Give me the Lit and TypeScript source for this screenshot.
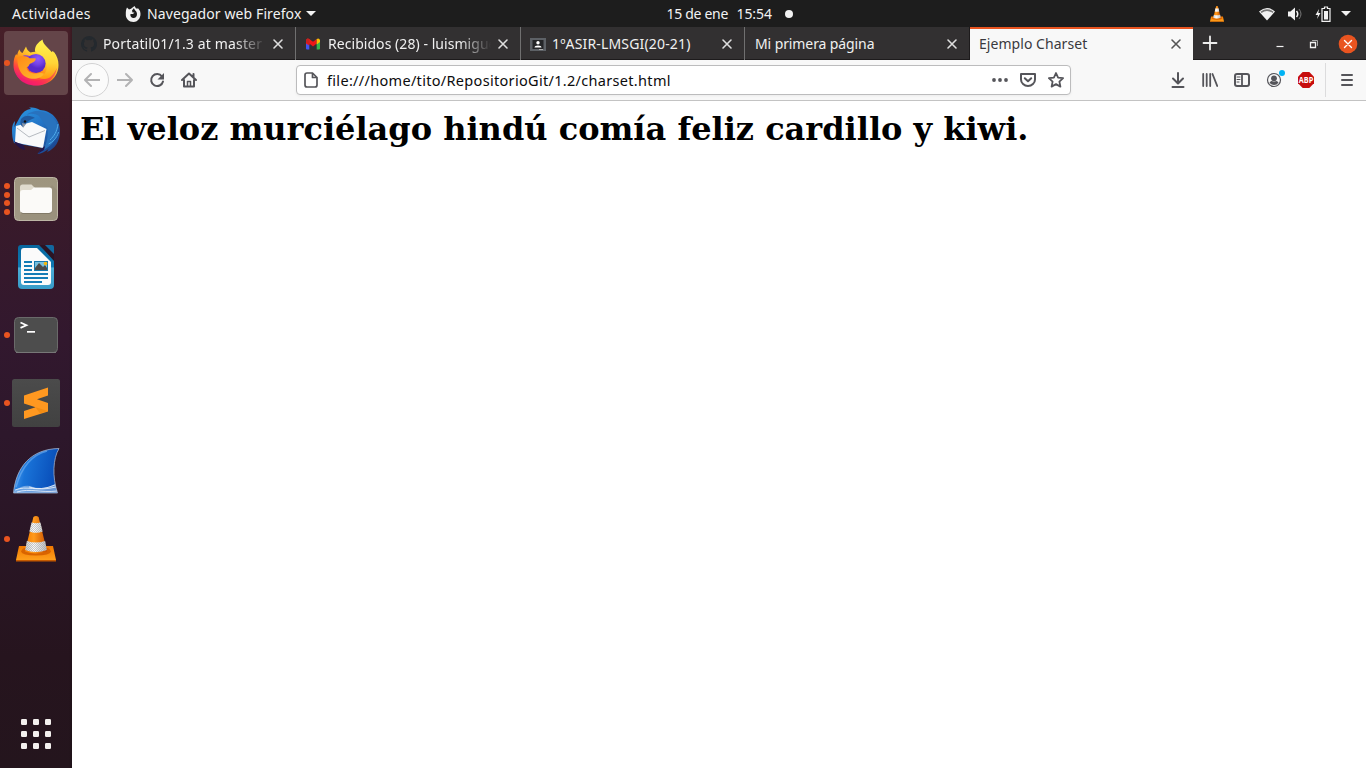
import { LitElement, html, css, svg, nothing, TemplateResult } from "lit";
import { customElement } from "lit/decorators.js";

const stripes = "M19.600 7.500q4.400 1.500 8.800 0l2.200 9q-6.600 2.500-13.200 0zM14.900 26q9.100 3 18.200 0l1.700 9q-10.800 4-21.600 0z";

const vlcCone = (id: string) => svg`
  <defs>
    <linearGradient id="${id}o"><stop offset="0" stop-color="#f47b00"/><stop offset=".4" stop-color="#ff9a1c"/><stop offset="1" stop-color="#c85000"/></linearGradient>
    <linearGradient id="${id}w"><stop offset="0" stop-color="#c9cccd"/><stop offset=".4" stop-color="#fafafa"/><stop offset="1" stop-color="#b9bcbd"/></linearGradient>
    <linearGradient id="${id}b" x2="0" y2="1"><stop offset="0" stop-color="#f07800"/><stop offset="1" stop-color="#ffa21e"/></linearGradient>
  </defs>
  <path d="M7 31h34l3 14v1H4v-1z" fill="url(#${id}b)"/><path d="M4 45h40v1.500H4z" fill="#c55a00"/>
  <path d="M9 36.500q1-3 3-3.500h24q2 .5 3 3.500-1 4-15 4t-15-4z" fill="#d96400"/>
  <path d="M12.900 36.500L21.400 2q2.600-2 5.200 0l8.500 34.500q-11.100 4-22.200 0z" fill="url(#${id}o)"/>
  <path d=${stripes} fill="url(#${id}w)"/>
`;

const firefox = svg`
  <defs>
    <linearGradient id="fa" x1=".85" y1=".05" x2=".2" y2=".95"><stop offset="0" stop-color="#fff44f"/><stop offset=".35" stop-color="#ffc62e"/><stop offset=".58" stop-color="#ff8a16"/><stop offset=".78" stop-color="#ff3b47"/><stop offset="1" stop-color="#e31587"/></linearGradient>
    <radialGradient id="fb" cx=".6" cy=".25"><stop offset="0" stop-color="#9059ff"/><stop offset=".6" stop-color="#7542e5"/><stop offset="1" stop-color="#592acb"/></radialGradient>
    <linearGradient id="fc" x2="1" y2="1"><stop offset="0" stop-color="#ff8a16"/><stop offset="1" stop-color="#ffbd2f"/></linearGradient>
    <linearGradient id="fd" x2="0" y2="1"><stop offset="0" stop-color="#fff44f"/><stop offset=".6" stop-color="#ffd537"/><stop offset="1" stop-color="#ff980e"/></linearGradient>
  </defs>
  <path d="M7.500 10.500c.5 1.800 1.500 3 3 3.500L14 7.500c.7 2.500 2 4.500 4.500 6 4-1.500 9-1 13 1.500l9-1 1.500-1c3 4 4.500 8 4.500 13C46.500 38.500 36.500 46.500 24 46.500S1.500 37.500 1.500 26c0-5 1-8.500 2.700-11 .5 1 .8 1.200 1 1.200.3-2 1-4 2.300-5.700z" fill="url(#fa)"/>
  <path d="M3 31c3 9 12 11.500 21 10.500C33 40.500 40 37 45 29c-2 11-11 17.500-21 17.500S5 42 3 31z" fill="#f5156c" opacity=".5"/>
  <path d="M23 12.500C22.500 7 26 3.500 30.500.5c.5 5.500 6.500 8.500 9 12.500l1.500-1c3.500 6 4.500 11 3.500 16-1.500 7.500-7 12-12 12-3.500 0-5-1-5.500-2 7-2 9-8 7-14-1.500-5-6-8.500-11-11.500z" fill="url(#fd)"/>
  <path d="M7.500 19c5-4 8-2.500 10-2 5-2.500 11-1.500 14 2.500" fill="#873fce"/>
  <circle cx="24" cy="24.500" r="9.600" fill="url(#fb)"/>
  <path d="M5.500 18.500c4.500-2.500 9-1.500 12 .8h6c1 2-1.500 4-5.500 5.500-1.200 1.500-1.300 3-3.500 3.500.5 5 6 7 11.500 6 3-.5 5-.5 6 .5-3 5-11 6.500-17.500 3.500S5 27 5.500 18.500z" fill="url(#fc)"/>
`;

const thunderbird = svg`
  <defs><linearGradient id="ta" x2=".8" y2="1"><stop offset="0" stop-color="#2c9be6"/><stop offset=".5" stop-color="#2374c6"/><stop offset="1" stop-color="#1b438c"/></linearGradient></defs>
  <path d="M8 10C11 5 14 2.500 19 2c-1-1-2-1.200-2-1.200 4-.8 8 .2 11 2.200 11 .5 20 9 20 21 0 10-5 18-13 21l1.500-3c-4 3-7 4.500-11 5L30 41 2 36C.5 32 0 28 0 23c0-4 1-7 3-9l-.5 6z" fill="url(#ta)"/>
  <path d="M4 19l16-4 14.500 7L31 41 3 35.500z" fill="#f8f9fa"/><path d="M5 21l12 9 16-6.500" stroke="#b5bac0" fill="none"/>
  <path d="M9 13C13 6 21 5 27 9l8.500 12c1 8-1 15-4 22 12-6 16-16 13-28C38 5 22-3 9 13z" fill="#2872be"/>
  <path d="M9 12c5-5 10-3 14-1-5 1-8 4-12 9-3-1.500-3-5-2-8z" fill="#215a9f"/><path d="M10 16l1 5 3-4z" fill="#8c98a8"/><circle cx="13" cy="14.500" r="1.200" fill="#111"/>
  <path d="M2 34c3 2 9 3 10 5l1 4C8 42 4 38.500 2 34zM29 42l4-3-1 4-6 3.500z" fill="#23164a"/>
  <path d="M46 17c-1 8-4 12-8 16M46.500 25c-2 7-6 10-10 12" stroke="#4fabea" fill="none"/>
`;

const files = svg`
  <defs><linearGradient id="na" x2="0" y2="1"><stop offset="0" stop-color="#9e957f"/><stop offset="1" stop-color="#a29a86"/></linearGradient></defs>
  <rect x="2.500" y="2.500" width="43" height="43" rx="4" fill="url(#na)" stroke="#bdb6a5"/>
  <path d="M8 40L40 10l5 5v26q0 4-4 4H8z" fill="#8b846f" opacity=".35"/>
  <path d="M8 12q0-2.500 2.500-2.500h9L23 13v5H8z" fill="#e0dbcd"/><path d="M8 18q0-3 3-3h8l3-2.500h15.500q2.500 0 2.500 2.500v20q0 3-3 3H11q-3 0-3-3z" fill="#fbfaf8"/>
  <path d="M9 37.500q1 1 2 1h26q2 0 3-2" stroke="#78705f" fill="none" opacity=".7"/>
`;

const writer = svg`
  <defs><linearGradient id="wa" x2="0" y2="1"><stop offset="0" stop-color="#07679e"/><stop offset=".5" stop-color="#0f79b2"/><stop offset=".52" stop-color="#4baed8"/><stop offset="1" stop-color="#379cc9"/></linearGradient></defs>
  <path d="M9 2h18l15 15v25q0 4-4 4H10q-4 0-4-4V5q0-3 3-3z" fill="url(#wa)"/>
  <path d="M12 5h13l14 14v20q0 3-3 3H12q-3 0-3-3V8q0-3 3-3z" fill="#fbfbfb"/>
  <path d="M28 2h5l9 9v7z" fill="#2b1424"/><path d="M33 2h7q2 0 2 2v7z" fill="#1268a0"/>
  <path d="M12 18h8v2h-8zm0 4h8v2h-8zm0 4h8v2h-8zm0 4h24v2H12zm0 4h24v2H12zm0 4h18v2H12z" fill="#147cb6"/>
  <path d="M22 18h14v10H22z" fill="#1678ad"/><path d="M23 19h12v8H23z" fill="#77c0df"/><path d="M23 27v-2l4-5 4 4 2-2 2 3v2z" fill="#4b4b4b"/><circle cx="33.500" cy="20.500" r="1.800" fill="#f5b70e"/>
`;

const terminal = svg`
  <rect x="2.500" y="6.500" width="43" height="35" rx="4" fill="#4d4d4d" stroke="#6a6a6a"/>
  <path d="M4 41.500h40" stroke="#777"/><path d="M8.500 11.500l6 2.700-6 2.700" fill="none" stroke="#fff" stroke-width="1.700"/><path d="M15 20h8v1.700h-8z" fill="#fff"/>
`;

const sublime = svg`
  <defs><linearGradient id="sa" x2="0" y2="1"><stop offset="0" stop-color="#4b4b4b"/><stop offset="1" stop-color="#414141"/></linearGradient></defs>
  <rect width="48" height="48" rx="2.500" fill="url(#sa)"/>
  <path d="M12 16.500L36 8.500v8L25 20.300 36 24v8.500L12 40v-8l11.500-3.800L12 24.500z" fill="#ff9820"/><path d="M13 25l23 7-8 2.500-4.500-6.300z" fill="#e27c00" opacity=".4"/>
`;

const wireshark = svg`
  <defs><linearGradient id="ka" x1="0" y1=".5" x2="1" y2=".7"><stop offset="0" stop-color="#4a9bed"/><stop offset=".25" stop-color="#1973d8"/><stop offset="1" stop-color="#0648b4"/></linearGradient></defs>
  <path d="M1.500 46C4 20 19 2 47 1.500c-6 10-7 28-1.500 44.500z" fill="url(#ka)" stroke="#a4b1c9" stroke-width=".8"/>
  <path d="M4 40C9 22 19 8 35 4" stroke="#72b0f2" stroke-width="1.500" opacity=".6" fill="none"/>
  <path d="M2 44q11-8 19-4t22-3l2 9H2z" fill="#a8c6ea" opacity=".6"/><path d="M3 43c12-5 21 2 41-3M5 45c13-4 24 1 40-1M17 40q12 4 26-2" stroke="#fff" stroke-width=".7" fill="none"/>
`;

const vlc = svg`
  <defs><pattern id="va" width="2" height="2" patternUnits="userSpaceOnUse"><path d="M0 0h1v1H0zM1 1h1v1H1z" fill="#999"/></pattern></defs>
  ${vlcCone("v")}
  <path d=${stripes} fill="url(#va)" opacity=".5"/>
`;

interface Launcher { name: string; icon: unknown; windows: number; active?: boolean }
const launchers: Launcher[] = [
  { name: "firefox", icon: firefox, windows: 1, active: true },
  { name: "thunderbird", icon: thunderbird, windows: 0 },
  { name: "files", icon: files, windows: 4 },
  { name: "writer", icon: writer, windows: 0 },
  { name: "terminal", icon: terminal, windows: 1 },
  { name: "sublime", icon: sublime, windows: 1 },
  { name: "wireshark", icon: wireshark, windows: 0 },
  { name: "vlc", icon: vlc, windows: 1 },
];

const github = svg`<path fill="#24292e" d="M8 0a8 8 0 0 0-2.530 15.590c.4.070.55-.17.55-.38v-1.340c-2.230.48-2.700-1.070-2.700-1.070-.36-.92-.89-1.170-.89-1.170-.73-.5.060-.49.060-.49.800.060 1.230.83 1.230.83.71 1.220 1.870.87 2.330.66.070-.52.280-.87.500-1.070-1.780-.2-3.640-.89-3.640-3.950 0-.87.310-1.590.82-2.150-.08-.2-.36-1.020.080-2.120 0 0 .67-.21 2.200.82a7.600 7.600 0 0 1 4 0c1.530-1.040 2.200-.82 2.200-.82.44 1.100.16 1.920.080 2.120.51.560.82 1.270.82 2.150 0 3.070-1.870 3.750-3.650 3.950.29.250.54.730.54 1.480v2.190c0 .210.150.460.550.380A8 8 0 0 0 8 0z"/>`;
const gmail = svg`<path d="M1 4v8.500q0 1 1 1h2.300V7z" fill="#4254ee"/><path d="M15 4v8.500q0 1-1 1h-2.300V7z" fill="#34b84c"/><path d="M1 7.500V4q1-2.500 3.300-1L8 5.800 11.700 3v4.500L8 10.500 4.300 7.500v2z" fill="#ee1717"/><path d="M11.700 3Q14 1.500 15 4v2l-3.300 2.500z" fill="#fbbc04"/><path d="M1 4v2l3.300 2.500V3Q2 1.500 1 4z" fill="#c5221f"/>`;
const classroom = svg`<path d="M0 2h16v13H0z" fill="#5d6166"/><path d="M2.500 4h11v9h-11z" fill="#242527"/><circle cx="8" cy="6.800" r="1.700" fill="#fff"/><path d="M4.500 11.500q0-2 3.500-2t3.500 2z" fill="#fff"/><path d="M9 13h4v1H9z" fill="#aaa"/>`;

interface Tab { key: string; title: string; icon?: unknown; active?: boolean }
const tabs: Tab[] = [
  { key: "t1", title: "Portatil01/1.3 at master -", icon: github },
  { key: "t2", title: "Recibidos (28) - luismigue", icon: gmail },
  { key: "t3", title: "1ºASIR-LMSGI(20-21)", icon: classroom },
  { key: "t4", title: "Mi primera página" },
  { key: "t5", title: "Ejemplo Charset", active: true },
];

const glyph = (body: unknown, cls = "", size = 16): TemplateResult =>
  html`<svg class="ic ${cls}" width=${size} height=${size} viewBox="0 0 ${size} ${size}" fill="none" stroke="currentColor" stroke-width="2" stroke-linecap="round" stroke-linejoin="round">${body}</svg>`;
const cross = svg`<path d="M4 4l8 8M12 4l-8 8" stroke-width="1.600"/>`;

@customElement("top-bar")
class TopBar extends LitElement {
  static styles = css`
    :host { display: grid; grid-template-columns: 1fr auto 1fr; align-items: center; height: 27px; background: #1d1d1d; color: #f2f2f2; font: 14px/27px "Noto Sans", sans-serif; white-space: pre; }
    .left, .mid, .right { display: flex; align-items: center; height: 27px; }
    .left { padding-left: 12px; }
    .act { width: 113px; letter-spacing: .38px; }
    .app { width: 159px; margin-left: 5px; letter-spacing: .1px; }
    .mid { padding-left: 93px; gap: 8px; }
    .date { width: 62px; letter-spacing: -.3px; } .time { width: 35px; letter-spacing: -.1px; }
    .dot { width: 8px; height: 8px; border-radius: 50%; background: #f2f2f2; margin-left: 5px; }
    .right { justify-content: flex-end; padding-right: 15px; }
    .cone { margin-right: 34px; } .wifi { margin-right: 12px; } .vol { margin-right: 12px; } .bat { margin-right: 10px; }
    svg { display: block; flex: none; }
  `;
  render() {
    return html`
      <div class="left"><span class="act">Actividades</span>
        <svg width="17" height="16" viewBox="0 0 17 16"><path fill="#f2f2f2" d="M2 1.500l2 2 2-.8L9.500 0 11 2.500l2.300 0L15 5c2 6-2 11-6.500 11S.5 12.500.8 8C.8 5.500 1 3.500 2 1.500z"/><path fill="#1d1d1d" d="M7 4.500l2-2.500c0 2 3 3 3 6s-2 4.500-4 4-3-2-2.500-4H8l1.500-1.500H7.500z"/></svg>
        <span class="app">Navegador web Firefox</span>
        <svg width="10" height="5" viewBox="0 0 10 5"><path d="M0 0h10L5 5z" fill="#f2f2f2"/></svg></div>
      <div class="mid"><span class="date">15 de ene</span><span class="time">15:54</span><span class="dot"></span></div>
      <div class="right">
        <svg class="cone" width="16" height="16" viewBox="3 1 42 46">${vlcCone("p")}</svg>
        <svg class="wifi" width="16" height="14" viewBox="0 0 16 14"><path d="M0 4.500q8-7 16 0L8 13.500z" fill="#f2f2f2"/><path d="M1.500 4.700q6.500-4.700 13 0l-1 1.200q-5.500-4-11 0z" fill="#777"/></svg>
        <svg class="vol" width="16" height="14" viewBox="0 0 16 14"><path d="M1 4.500h2.500L8 .5v13L3.500 9.500H1z" fill="#f2f2f2"/><path d="M9.500 4q2.500 3 0 6" stroke="#f2f2f2" stroke-width="1.500" fill="none"/><path d="M12 2q4 5 0 10" stroke="#777" fill="none"/></svg>
        <svg class="bat" width="16" height="16" viewBox="0 0 16 16"><path d="M4 3L.5 9H3l-1 4 3.500-6H3.300z" fill="#f2f2f2"/><path d="M7 2.500h2.500V1h3v1.500H15v12.900H7z" fill="none" stroke="#f2f2f2" stroke-width="1.200"/><path d="M9 5h4v8.500H9z" fill="#f2f2f2"/></svg>
        <svg width="10" height="5" viewBox="0 0 10 5"><path d="M0 0h10L5 5z" fill="#f2f2f2"/></svg>
      </div>`;
  }
}

@customElement("app-dock")
class AppDock extends LitElement {
  static styles = css`
    :host { display: flex; flex-direction: column; justify-content: space-between; box-sizing: border-box; width: 72px; padding: 4px 0 17px; background: linear-gradient(90deg, transparent 69px, #0003), linear-gradient(#461f28 0, #3c1b28 15%, #32182e 42%, #2d172b 55%, #26141e 85%, #24151d 100%); }
    .list { display: flex; flex-direction: column; gap: 4px; }
    .slot { display: grid; grid-template-columns: 4px 64px; align-items: center; height: 64px; }
    .dots { grid-area: 1 / 2; justify-self: start; display: flex; flex-direction: column; gap: 2.700px; z-index: 1; }
    .dot { width: 6px; height: 6px; border-radius: 50%; background: #e95420; flex: none; }
    .tile { grid-area: 1 / 2; width: 64px; height: 64px; border-radius: 4px; display: grid; place-items: center; }
    .on { background: #644549; }
    .apps { display: block; margin: 0 0 0 20px; }
  `;
  render() {
    return html`
      <div class="list">${launchers.map((l) => html`
        <div class="slot"><div class="dots">${Array.from({ length: l.windows }, () => html`<i class="dot"></i>`)}</div>
          <div class="tile ${l.active ? "on" : ""}"><svg width="48" height="48" viewBox="0 0 48 48">${l.icon}</svg></div></div>`)}
      </div>
      <svg class="apps" width="32" height="34" viewBox="0 0 32 34">${[0, 1, 2].map((r) => [0, 1, 2].map((c) => svg`<rect x=${1 + c * 12} y=${2 + r * 12} width="6" height="6" rx="1.200" fill="#f4f1ef"/>`))}</svg>`;
  }
}

@customElement("browser-window")
class BrowserWindow extends LitElement {
  static styles = css`
    :host { display: grid; grid-template-rows: 33px 41px 1fr; min-width: 0; background: #fff; font: 14px/20px "Noto Sans", sans-serif; white-space: nowrap; }
    svg { display: block; flex: none; }
    .strip { display: flex; background: #323031; box-shadow: inset 0 -1px #1d1b1c; color: #f0f0f0; }
    .tab { display: flex; align-items: center; box-sizing: border-box; width: 225px; border-right: 1px solid #707070; padding: 0 9px; }
    .t1 { width: 224px; } .t3 { width: 224px; } .t4 { border-right-color: #1d1b1c; padding-left: 10px; }
    .t5 { width: 223px; border: 0; background: #f8f8f8; color: #3a3a3e; box-shadow: inset 0 2px #e95420; }
    .fav { margin-right: 6px; }
    .title { flex: 1; overflow: hidden; white-space: pre; line-height: 33px; }
    .t1 .title, .t2 .title { -webkit-mask-image: linear-gradient(90deg, #000 calc(100% - 32px), transparent); mask-image: linear-gradient(90deg, #000 calc(100% - 32px), transparent); }
    .t1 .title { letter-spacing: .15px; } .t2 .title { margin-left: 1px; letter-spacing: .05px; }
    .t3 .title { letter-spacing: .16px; } .t4 .title { letter-spacing: -.1px; } .t5 .title { letter-spacing: .05px; }
    .x { color: #dedede; } .t5 .x { color: #555; }
    .tab .x { margin-left: 4px; }
    .plus { margin: 8px 0 0 9px; color: #eee; }
    .ctl { display: flex; align-items: center; margin-left: auto; padding-right: 8px; color: #f2f2f2; }
    .min { margin-right: 18px; } .max { margin-right: 16px; }
    .bar { display: flex; align-items: center; box-sizing: border-box; padding-left: 3px; background: #f8f8f8; border-bottom: 1px solid #c3c3c3; color: #55555a; }
    .back { display: grid; place-items: center; box-sizing: border-box; width: 34px; height: 34px; border: 1px solid #d2d2d3; border-radius: 50%; background: #fbfbfb; color: #b3b3b4; }
    .fwd { margin-left: 8px; color: #b3b3b4; } .gap { margin-left: 16px; }
    .url { display: flex; align-items: center; box-sizing: border-box; width: 775px; height: 30px; margin-left: 99px; padding: 0 6px; border: 1px solid #bcbcbd; border-radius: 4px; background: #fff; box-shadow: 0 1px 3px #0000000d; }
    .addr { flex: 1; margin-left: 8px; color: #0c0c0d; font-size: 14.500px; letter-spacing: .31px; }
    .g12 { margin-left: 12px; }
    .tools { display: flex; align-items: center; gap: 16px; margin-left: 99px; }
    .acct { overflow: visible; }
    .menu { display: flex; align-items: center; height: 34px; margin-left: 11px; padding-left: 13px; border-left: 1px solid #dcdcdd; }
    .abp { font: 700 8px "Open Sans", sans-serif; }
    .page { overflow: hidden; padding: 9px 8px; }
    h1 { margin: 0; color: #000; font: bold 32px/38px "DejaVu Serif", serif; }
  `;
  render() {
    return html`
      <div class="strip">
        ${tabs.map((t) => html`<div class="tab ${t.key}">
          ${t.icon ? html`<svg class="fav" width="16" height="16" viewBox="0 0 16 16">${t.icon}</svg>` : nothing}
          <span class="title">${t.title}</span>${glyph(cross, "x")}</div>`)}
        ${glyph(svg`<path d="M8 1.500v13M1.500 8h13" stroke-width="1.800"/>`, "plus")}
        <div class="ctl">
          ${glyph(svg`<path d="M4.500 10.500h7" stroke-width="1.200" stroke-linecap="butt"/>`, "min")}
          ${glyph(svg`<path d="M4.500 6.500h5v5h-5z" stroke-width="1.300" stroke-linejoin="miter"/><path d="M6.500 4.500h5v5" stroke-width="1" stroke="#aaa"/>`, "max")}
          ${glyph(svg`<circle cx="10" cy="10" r="9.300" fill="#e95420" stroke="none"/><path d="M6.500 6.500l7 7m0-7l-7 7" stroke="#fff" stroke-width="1.400"/>`, "", 20)}
        </div>
      </div>
      <div class="bar">
        <span class="back">${glyph(svg`<path d="M15.500 8H1M7 2L1 8l6 6"/>`)}</span>
        ${glyph(svg`<path d="M.5 8H15M9 2l6 6-6 6"/>`, "fwd")}
        ${glyph(svg`<path d="M13 4.500A6 6 0 1 0 14 9.500"/><path d="M15 1v6.500H8.500z" fill="currentColor" stroke="none"/>`, "gap")}
        ${glyph(svg`<path d="M1 8l7-6.500L15 8M3 8v6.500h10V8M12.500 5V2"/><path d="M6.500 14V9.500h3V14" stroke-width="1.500"/>`, "gap")}
        <div class="url">
          ${glyph(svg`<path d="M4 1h5.500L14 5.500V13q0 2-2 2H4q-2 0-2-2V3q0-2 2-2zM9.500 1v4.500H14" stroke-width="1.700"/>`)}
          <span class="addr">file:///home/tito/RepositorioGit/1.2/charset.html</span>
          ${glyph(svg`<g fill="currentColor" stroke="none"><circle cx="2" cy="8" r="1.900"/><circle cx="8" cy="8" r="1.900"/><circle cx="14" cy="8" r="1.900"/></g>`, "ell")}
          ${glyph(svg`<path d="M1 2h14v5.500a7 6.500 0 0 1-14 0zM4.800 6.200L8 9.200l3.200-3"/>`, "g12")}
          ${glyph(svg`<path d="M8 1l2.100 4.600 5 .6-3.700 3.400 1 5L8 12.100 3.600 14.600l1-5L.9 6.200l5-.6z" stroke-width="1.800"/>`, "g12")}
        </div>
        <div class="tools">
          ${glyph(svg`<path d="M8 1v10M3 6.500l5 5 5-5M2.500 15h11"/>`)}
          ${glyph(svg`<path d="M1.200 2v12M4.700 2v12M8.200 2v12M10.500 2l4.700 12" stroke-width="1.800"/>`)}
          ${glyph(svg`<rect x="1" y="2" width="14" height="12" rx="2"/><path d="M8 2v12" stroke-width="1.800"/><path d="M3 5h3M3 7.500h3M3 10h2" stroke-width="1"/>`)}
          <svg class="acct" width="16" height="22" viewBox="0 0 16 22"><circle cx="8" cy="11" r="6.500" fill="none" stroke="#55555a" stroke-width="1.200"/><circle cx="8" cy="9.300" r="2.900" fill="#55555a"/><path d="M3.500 13.500q1-1.800 2.500-1.600 2 1 4 0 1.500-.2 2.500 1.600Q11 16 8 16t-4.500-2.500z" fill="#55555a"/><circle cx="16" cy="4" r="3" fill="#00b3f4"/></svg>
          <svg width="16" height="16" viewBox="0 0 16 16"><path d="M4.700 0h6.600L16 4.700v6.600L11.300 16H4.700L0 11.300V4.700z" fill="#c70d0d"/><text class="abp" x=".8" y="10.900" fill="#fff" textLength="14.400" lengthAdjust="spacingAndGlyphs">ABP</text></svg>
        </div>
        <div class="menu">${glyph(svg`<path d="M3 3h10M3 8h10M3 13h10"/>`)}</div>
      </div>
      <div class="page"><h1>El veloz murciélago hindú comía feliz cardillo y kiwi.</h1></div>`;
  }
}

@customElement("app-root")
class AppRoot extends LitElement {
  static styles = css`
    :host { display: grid; grid-template: 27px 1fr / 72px 1fr; width: 1366px; height: 768px; overflow: hidden; }
    top-bar { grid-column: 1 / -1; }
  `;
  render() {
    return html`<top-bar></top-bar><app-dock></app-dock><browser-window></browser-window>`;
  }
}
